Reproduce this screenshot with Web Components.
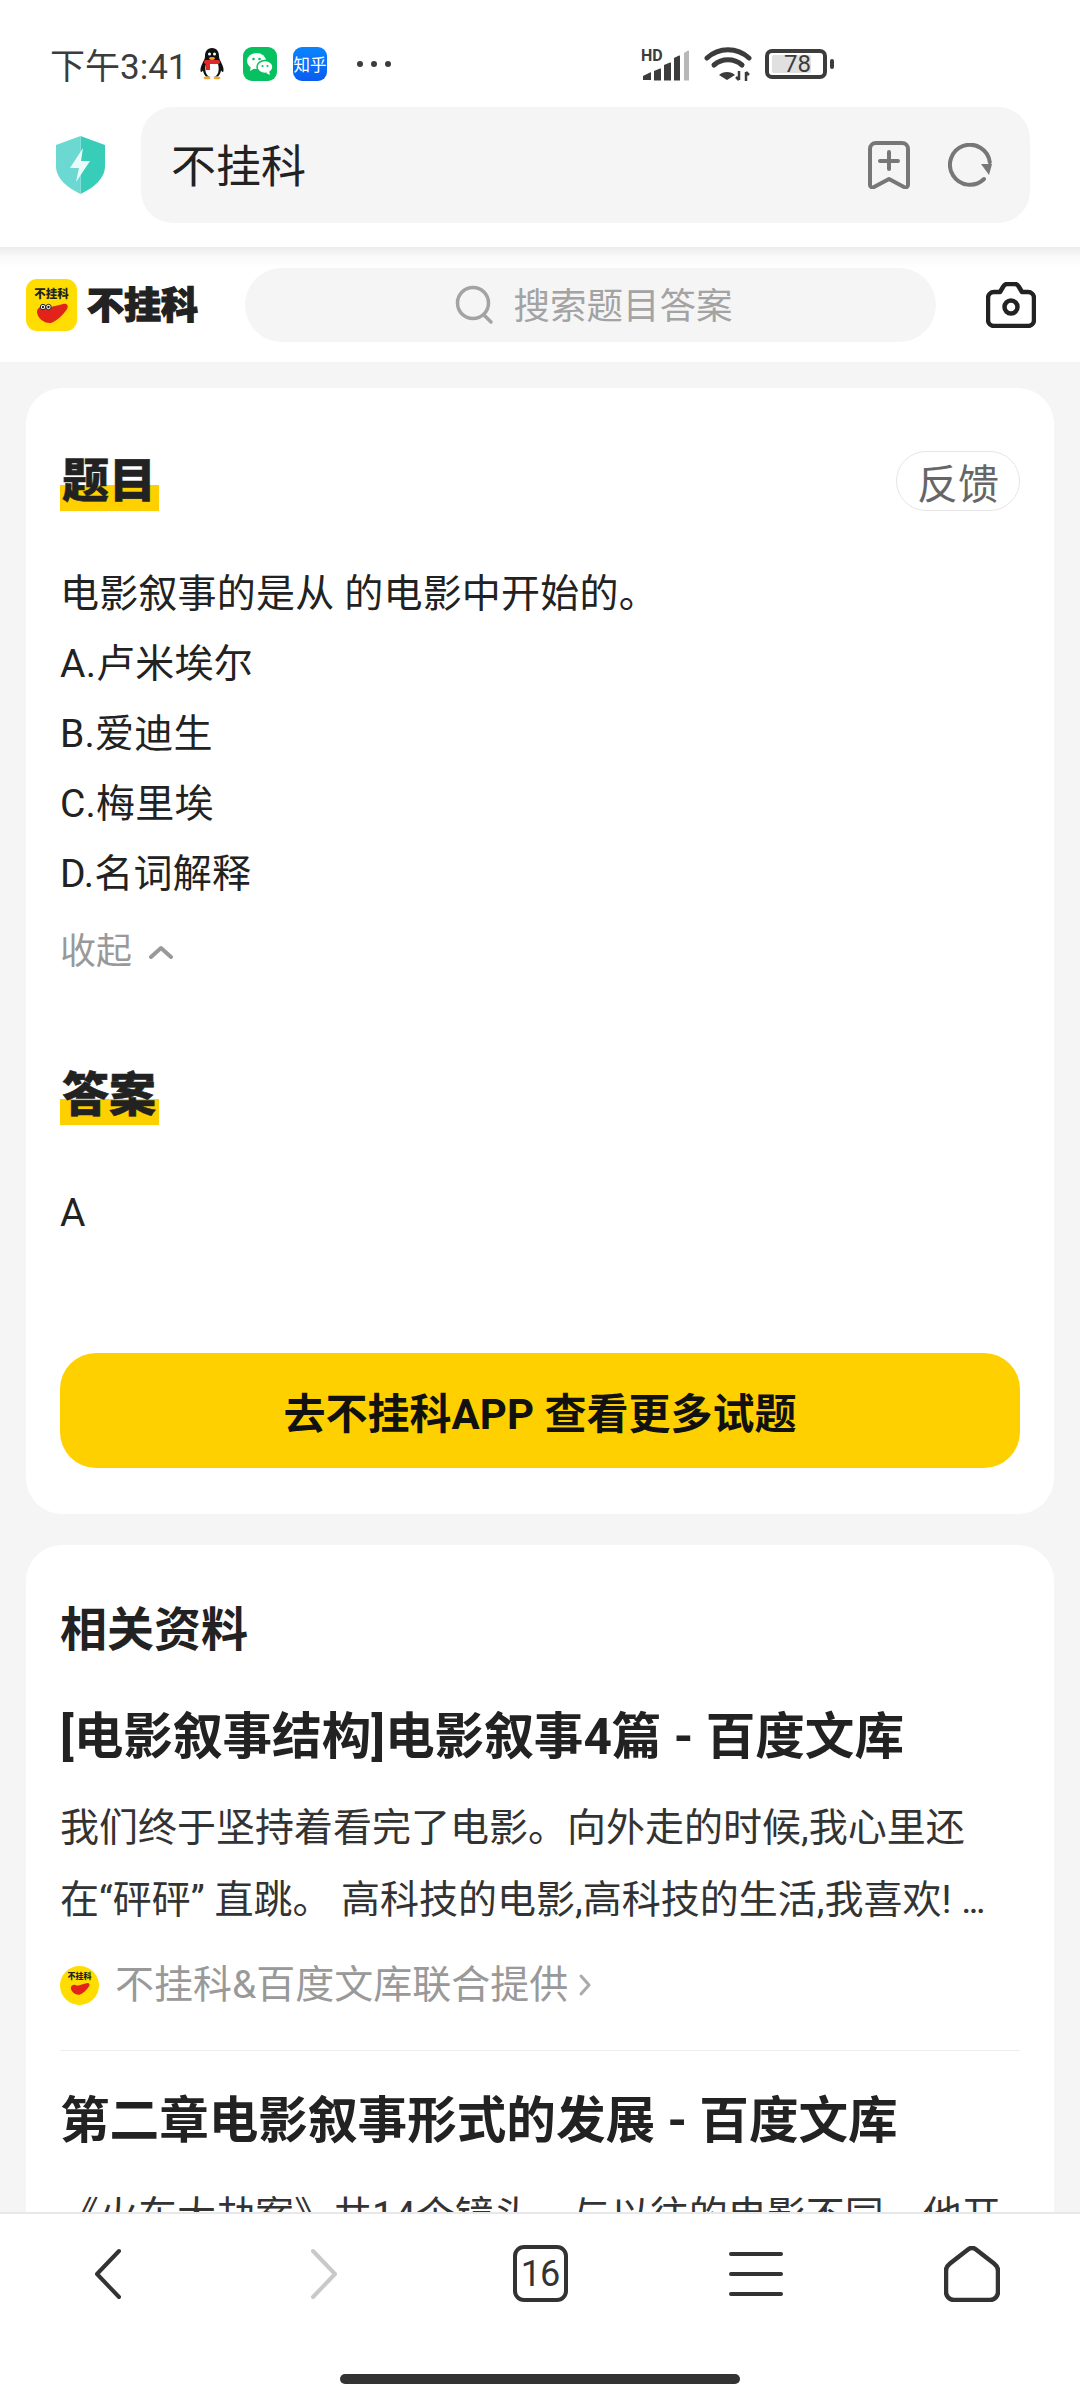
<!DOCTYPE html>
<html lang="zh">
<head>
<meta charset="utf-8">
<title>不挂科</title>
<style>
  html, body { margin: 0; padding: 0; }
  body {
    width: 1080px;
    height: 2400px;
    overflow: hidden;
    display: flex;
    flex-direction: column;
    background: #f5f5f5;
    color: #222;
    font-family: Roboto, "Noto Sans CJK SC", sans-serif;
  }
  page-main { flex: 1; min-height: 0; }
</style>
</head>
<body>
  <status-bar></status-bar>
  <address-bar>不挂科</address-bar>
  <site-header></site-header>
  <page-main>
    <question-card>
      <p>电影叙事的是从 的电影中开始的。</p>
      <p>A.卢米埃尔</p>
      <p>B.爱迪生</p>
      <p>C.梅里埃</p>
      <p>D.名词解释</p>
    </question-card>
    <related-card>
      <result-item title="[电影叙事结构]电影叙事4篇 - 百度文库" source>我们终于坚持着看完了电影。向外走的时候,我心里还在“砰砰” 直跳。 高科技的电影,高科技的生活,我喜欢! <span style="letter-spacing:-3px">...</span></result-item>
      <result-item title="第二章电影叙事形式的发展 - 百度文库">《火车大劫案》共14个镜头，与以往的电影不同，他开</result-item>
    </related-card>
  </page-main>
  <bottom-nav></bottom-nav>

<script>
class StatusBar extends HTMLElement {
    constructor() {
        super();
        this.shadowDOM = this.attachShadow({ mode: "open" });
        this.shadowDOM.innerHTML = `
        <style>
            :host {
                display: flex;
                align-items: center;
                height: 107px;
                padding: 20px 0 0 50px;
                box-sizing: border-box;
                background: #fff;
                color: #3c3c3c;
                font-size: 35px;
            }
            .time { width: 147px; white-space: nowrap; }
            .app { width: 34px; height: 34px; border-radius: 9px; margin-right: 16px; display: flex; align-items: center; justify-content: center; flex: none; }
            .wx { background: #07c160; }
            .zh { background: linear-gradient(#0a84ff, #0a5cf0); color: #fff; font-size: 16.500px; white-space: nowrap; }
            .qq { margin-right: 16px; flex: none; }
            .dots { margin-left: 13px; flex: none; }
            .right { margin-left: auto; display: flex; align-items: center; padding-right: 246px; }
            .right svg { display: block; flex: none; }
            .battery {
                box-sizing: border-box; width: 62px; height: 30px; margin-left: 13px;
                border: 4px solid #3c3c3c; border-radius: 7px; padding: 2px 3px; display: flex;
            }
            .level { width: 39px; background: #e0e0e0; border-radius: 2px; font-size: 24px; line-height: 18px; text-align: right; white-space: nowrap; }
            .nub { width: 4px; height: 10px; background: #3c3c3c; border-radius: 2px; margin-left: 3px; }
        </style>
        <span class="time">下午3:41</span>
        <svg class="qq" width="30" height="34" viewBox="0 0 30 34">
            <path d="M15 1c-5 0-7 4-7 8 0 2-.5 3-1.500 5-1.500 3-3.500 7-3 10 .3 1.500 1.500 1 2.500-.5.8 4 3 6 3 6h12s2.200-2 3-6c1 1.500 2.200 2 2.500.5.500-3-1.500-7-3-10-1-2-1.500-3-1.500-5 0-4-2-8-7-8z" fill="#111"/>
            <path d="M9 17c-1.500 5-1 13 6 13s7.500-8 6-13z" fill="#fff"/>
            <rect x="7" y="13" width="16" height="4" rx="2" fill="#e02a2a"/>
            <rect x="9" y="15" width="4" height="8" fill="#e02a2a"/>
            <ellipse cx="15" cy="11.500" rx="3" ry="1.400" fill="#f5a623"/>
            <circle cx="12.500" cy="7" r="1.500" fill="#fff"/><circle cx="17.500" cy="7" r="1.500" fill="#fff"/>
            <ellipse cx="10" cy="31" rx="3.500" ry="1.300" fill="#f5a623"/><ellipse cx="20" cy="31" rx="3.500" ry="1.300" fill="#f5a623"/>
        </svg>
        <span class="app wx">
            <svg width="28" height="24" viewBox="0 0 28 24">
                <ellipse cx="10.500" cy="9" rx="9.500" ry="8" fill="#fff"/>
                <path d="M5 14l-1 5 5-3z" fill="#fff"/>
                <ellipse cx="19" cy="15" rx="8" ry="6.500" fill="#fff" stroke="#07c160" stroke-width="1.500"/>
                <path d="M23 19l1 4-4-2z" fill="#fff"/>
                <circle cx="7.500" cy="7" r="1.300" fill="#07c160"/><circle cx="13.500" cy="7" r="1.300" fill="#07c160"/>
                <circle cx="16.500" cy="14" r="1.100" fill="#07c160"/><circle cx="21.500" cy="14" r="1.100" fill="#07c160"/>
            </svg>
        </span>
        <span class="app zh">知乎</span>
        <svg class="dots" width="36" height="8" viewBox="0 0 36 8">
            <circle cx="4" cy="4" r="3" fill="#3c3c3c"/><circle cx="18" cy="4" r="3" fill="#3c3c3c"/><circle cx="32" cy="4" r="3" fill="#3c3c3c"/>
        </svg>
        <div class="right">
            <svg width="52" height="40" viewBox="0 -3 52 40">
                <text x="1" y="13.500" font-family="Roboto" font-weight="700" font-size="16" fill="#3c3c3c">HD</text>
                <path d="M3 29l7-3.500q1-.5 1 .5v7H3z" fill="#3c3c3c"/>
                <path d="M14 24l6-2.500q1-.4 1 .6V33.500h-7z" fill="#3c3c3c"/>
                <path d="M24 18l6-2.500q1-.4 1 .6V33.500h-7z" fill="#3c3c3c"/>
                <path d="M34 11l5-2.500q1-.4 1 .6V33.500h-6z" fill="#3c3c3c"/>
                <path d="M44 6l4-2.500q1-.4 1 .6V33.500h-5z" fill="#b8b8b8"/>
            </svg>
            <svg width="48" height="36" viewBox="0 0 48 36" style="margin-left:12px">
                <path d="M3 12C15 1 33 1 45 12" fill="none" stroke="#3c3c3c" stroke-width="5" stroke-linecap="round"/>
                <path d="M10 19c8-7 20-7 28 0" fill="none" stroke="#3c3c3c" stroke-width="5" stroke-linecap="round"/>
                <path d="M23 34l-8-5c4-4 12-4 16 0z" fill="#3c3c3c"/>
                <path d="M35 25v9m-3-3l3 3M42 35v-9m3 3l-3-3" stroke="#3c3c3c" stroke-width="2.500" fill="none"/>
            </svg>
            <div class="battery"><div class="level">78</div></div>
            <div class="nub"></div>
        </div>`;
    }
}

class AddressBar extends HTMLElement {
    constructor() {
        super();
        this.shadowDOM = this.attachShadow({ mode: "open" });
        this.shadowDOM.innerHTML = `
        <style>
            :host {
                display: flex;
                align-items: center;
                height: 140px;
                padding: 0 50px 24px 56px;
                box-sizing: border-box;
                background: #fff;
                position: relative;
                z-index: 1;
            }
            .box {
                flex: 1;
                height: 116px;
                margin-left: 36px;
                padding: 0 38px 0 30px;
                border-radius: 32px;
                background: #f5f5f5;
                display: flex;
                align-items: center;
                font-size: 45px;
                color: #222;
            }
            .text { flex: 1; padding-bottom: 4px; }
            svg { flex: none; display: block; }
        </style>
        <svg width="49" height="58" viewBox="0 0 49 58">
            <path d="M24.500 0L49 9v21c0 13-12 22-24.500 28z" fill="#38cdb9"/>
            <path d="M24.500 0L0 9v21c0 13 12 22 24.500 28z" fill="#6bd8d2"/>
            <path d="M27 12L14 32h9l-3 14 14-21h-9z" fill="#eafcfa"/>
        </svg>
        <div class="box">
            <span class="text"><slot></slot></span>
            <svg width="42" height="48" viewBox="0 0 42 48" fill="none" stroke="#777" stroke-width="4" stroke-linecap="round" stroke-linejoin="round">
                <path d="M2 8a6 6 0 0 1 6-6h26a6 6 0 0 1 6 6v36c0 2-2 3-4 2l-15-8-15 8c-2 1-4 0-4-2z"/>
                <path d="M21 11v17M12 20h18"/>
            </svg>
            <svg width="44" height="44" viewBox="0 0 44 44" fill="none" style="margin-left:38px">
                <path d="M36 36A20 20 0 1 1 41.800 19.200" stroke="#777" stroke-width="4" stroke-linecap="round"/>
                <path d="M33 21h11l-3 11z" fill="#777"/>
            </svg>
        </div>`;
    }
}

class SiteHeader extends HTMLElement {
    constructor() {
        super();
        this.shadowDOM = this.attachShadow({ mode: "open" });
        this.shadowDOM.innerHTML = `
        <style>
            :host {
                display: flex;
                align-items: center;
                height: 115px;
                padding: 0 44px 0 26px;
                box-sizing: border-box;
                background: linear-gradient(#ececec 0, #fafafa 10px, #fff 20px);
            }
            .logo {
                width: 51px; height: 52px; border-radius: 11px; background: #ffdd00;
                display: flex; flex-direction: column; align-items: center; flex: none;
                font-size: 11.500px; font-weight: 900; color: #222; line-height: 14px; padding-top: 8px; box-sizing: border-box;
                white-space: nowrap;
            }
            .word {
                margin-left: 10px; width: 113px; padding-bottom: 3px;
                font-size: 37px; font-weight: 900; color: #222; white-space: nowrap; flex: none;
                -webkit-text-stroke: 1.200px #222;
            }
            .search {
                flex: 1; height: 74px; margin-left: 45px; border-radius: 37px; background: #f5f5f5;
                display: flex; align-items: center; justify-content: center; padding-left: 6px;
                color: #a3a3a3; font-size: 36.500px;
            }
            .search span { padding-bottom: 3px; }
            .search svg { margin-right: 19px; }
            .cam { margin-left: 50px; flex: none; }
        </style>
        <div class="logo">
            <span>不挂科</span>
            <svg width="36" height="23" viewBox="0 0 36 23" style="margin-top:1px">
                <path d="M3 10C3 5 9 3 13 6 18 5 24 3 29 2 33 1 35 4 33 7 29 13 23 19 17 21 11 22 3 16 3 10z" fill="#e2231a"/>
                <circle cx="9" cy="5" r="2.700" fill="#fff" stroke="#222"/><circle cx="14.500" cy="5" r="2.700" fill="#fff" stroke="#222"/>
                <circle cx="9" cy="5" r="1.200" fill="#222"/><circle cx="14.500" cy="5" r="1.200" fill="#222"/>
            </svg>
        </div>
        <span class="word">不挂科</span>
        <div class="search">
            <svg width="40" height="40" viewBox="0 0 40 40" fill="none" stroke="#a3a3a3" stroke-width="3.500" stroke-linecap="round">
                <circle cx="18" cy="18" r="15.500"/><path d="M30 31l6 6"/>
            </svg>
            <span>搜索题目答案</span>
        </div>
        <svg class="cam" width="50" height="46" viewBox="0 0 50 46" fill="none" stroke="#222" stroke-width="4.500" stroke-linejoin="round">
            <path d="M8 10h6l3-5c1-2 2-3 4-3h8c2 0 3 1 4 3l3 5h6a6 6 0 0 1 6 6v22a6 6 0 0 1-6 6H8a6 6 0 0 1-6-6V16a6 6 0 0 1 6-6z"/>
            <circle cx="25" cy="25" r="6.500"/>
        </svg>`;
    }
}

class SectionTitle extends HTMLElement {
    constructor() {
        super();
        this.shadowDOM = this.attachShadow({ mode: "open" });
        this.shadowDOM.innerHTML = `
        <style>
            :host {
                display: inline-block;
                padding: 0 3px 0 2px;
                font-size: 47px;
                line-height: 60px;
                font-weight: 900;
                color: #222;
                -webkit-text-stroke: .500px #222;
                background: linear-gradient(#ffd000, #ffd000) no-repeat left 0 bottom 0 / 100% 26px;
            }
        </style>
        <slot></slot>`;
    }
}

class QuestionCard extends HTMLElement {
    constructor() {
        super();
        this.shadowDOM = this.attachShadow({ mode: "open" });
        this.shadowDOM.innerHTML = `
        <style>
            :host {
                display: block;
                margin: 26px 26px 0;
                height: 1126px;
                padding: 63px 34px 0;
                box-sizing: border-box;
                border-radius: 36px;
                background: #fff;
            }
            .head { display: flex; justify-content: space-between; align-items: center; }
            .feedback {
                box-sizing: border-box; width: 124px; height: 60px; border: 1px solid #e6e6e6; border-radius: 30px;
                display: flex; align-items: center; justify-content: center; font-size: 41px; color: #666;
            }
            .body { margin-top: 48px; font-size: 39px; line-height: 70px; color: #222; letter-spacing: .2px; }
            ::slotted(p) { margin: 0; }
            .fold { margin-top: 18px; font-size: 36px; line-height: 50px; color: #999; display: flex; align-items: center; }
            .fold svg { margin-left: 17px; }
            .ans { margin-top: 88px; }
            .a { margin-top: 58px; font-size: 39px; line-height: 60px; color: #222; }
            .btn {
                margin-top: 110px; height: 115px; border-radius: 36px; background: #ffd000;
                display: flex; align-items: center; justify-content: center;
                font-size: 42px; font-weight: 700; color: #111;
            }
        </style>
        <div class="head">
            <section-title>题目</section-title>
            <div class="feedback">反馈</div>
        </div>
        <div class="body"><slot></slot></div>
        <div class="fold">收起
            <svg width="24" height="14" viewBox="0 0 24 14" fill="none" stroke="#999" stroke-width="4" stroke-linecap="round" stroke-linejoin="round"><path d="M2 12L12 3l10 9"/></svg>
        </div>
        <div class="ans"><section-title>答案</section-title></div>
        <div class="a">A</div>
        <div class="btn">去不挂科APP 查看更多试题</div>`;
    }
}

class RelatedCard extends HTMLElement {
    constructor() {
        super();
        this.shadowDOM = this.attachShadow({ mode: "open" });
        this.shadowDOM.innerHTML = `
        <style>
            :host {
                display: block;
                margin: 31px 26px 0;
                padding: 55px 34px 0;
                box-sizing: border-box;
                border-radius: 36px;
                background: #fff;
            }
            h2 { margin: 0 0 42px; font-size: 47px; line-height: 60px; font-weight: 700; color: #222; }
        </style>
        <h2>相关资料</h2>
        <slot></slot>`;
    }
}

class ResultItem extends HTMLElement {
    constructor() {
        super();
        this.shadowDOM = this.attachShadow({ mode: "open" });
        const hasSource = this.hasAttribute("source");
        this.shadowDOM.innerHTML = `
        <style>
            :host { display: block; }
            h3 { margin: 0; font-size: 49.600px; line-height: 70px; font-weight: 700; color: #222; white-space: nowrap; }
            .text { margin-top: 20px; padding-right: 28px; font-size: 39px; line-height: 72px; color: #333; }
            :host(:not([source])) .text { margin-top: 24px; padding-right: 0; white-space: nowrap; }
            .src { margin-top: 22px; display: flex; align-items: center; font-size: 39px; line-height: 54px; color: #999; }
            .dot {
                width: 39px; height: 39px; border-radius: 50%; background: #ffdd00; margin-right: 16px; flex: none;
                display: flex; flex-direction: column; align-items: center; font-size: 8px; line-height: 10px; font-weight: 900; color: #222; padding-top: 6px; box-sizing: border-box;
            }
            .sep { margin-top: 38px; margin-bottom: 35px; border-top: 1px solid #eee; }
        </style>
        <h3></h3>
        <div class="text"><slot></slot></div>
        ${hasSource ? `
        <div class="src">
            <span class="dot"><span>不挂科</span>
                <svg width="22" height="14" viewBox="0 0 36 23"><path d="M3 10C3 5 9 3 13 6 18 5 24 3 29 2 33 1 35 4 33 7 29 13 23 19 17 21 11 22 3 16 3 10z" fill="#e2231a"/></svg>
            </span>
            <span>不挂科&amp;百度文库联合提供</span>
            <svg width="14" height="24" viewBox="0 0 14 24" fill="none" stroke="#aaa" stroke-width="3" stroke-linecap="round" stroke-linejoin="round" style="margin-left:10px"><path d="M3 3l8 9-8 9"/></svg>
        </div>
        <div class="sep"></div>` : ""}`;
        this.shadowDOM.querySelector("h3").textContent = this.getAttribute("title");
    }
}

class BottomNav extends HTMLElement {
    constructor() {
        super();
        this.shadowDOM = this.attachShadow({ mode: "open" });
        this.shadowDOM.innerHTML = `
        <style>
            :host {
                display: flex;
                flex-direction: column;
                height: 188px;
                flex: none;
                box-sizing: border-box;
                border-top: 2px solid #e8e8e8;
                background: #fff;
                position: relative;
            }
            .row { display: grid; grid-template-columns: repeat(5, 1fr); height: 160px; align-items: center; justify-items: center; padding-bottom: 41px; box-sizing: border-box; }
            .tabs {
                box-sizing: border-box; width: 55px; height: 57px; border: 4px solid #333; border-radius: 11px;
                display: flex; align-items: center; justify-content: center; font-size: 36px; color: #333; letter-spacing: -1px;
            }
            .bar { width: 400px; height: 10px; border-radius: 5px; background: #333; align-self: center; }
        </style>
        <div class="row">
            <svg width="30" height="52" viewBox="0 0 30 52" fill="none" stroke="#333" stroke-width="4" stroke-linecap="round" stroke-linejoin="round"><path d="M26 3L4 26l22 23"/></svg>
            <svg width="30" height="52" viewBox="0 0 30 52" fill="none" stroke="#c9c9c9" stroke-width="4" stroke-linecap="round" stroke-linejoin="round"><path d="M4 3l22 23L4 49"/></svg>
            <div class="tabs">16</div>
            <svg width="54" height="48" viewBox="0 0 54 48" fill="none" stroke="#333" stroke-width="4" stroke-linecap="round"><path d="M2 4h50M2 24h50M2 44h50"/></svg>
            <svg width="56" height="56" viewBox="0 0 56 56" fill="none" stroke="#333" stroke-width="4.500" stroke-linejoin="round"><path d="M24 3.500c2.500-2 5.500-2 8 0l18 14c2.500 2 4 4 4 7V46a8 8 0 0 1-8 8H10a8 8 0 0 1-8-8V24.500c0-3 1.500-5 4-7z"/></svg>
        </div>
        <div class="bar"></div>`;
    }
}

class PageMain extends HTMLElement {
    constructor() {
        super();
        this.shadowDOM = this.attachShadow({ mode: "open" });
        this.shadowDOM.innerHTML = `
        <style>
            :host { display: block; overflow: hidden; background: #f5f5f5; }
        </style>
        <slot></slot>`;
    }
}

customElements.define("status-bar", StatusBar);
customElements.define("address-bar", AddressBar);
customElements.define("site-header", SiteHeader);
customElements.define("section-title", SectionTitle);
customElements.define("question-card", QuestionCard);
customElements.define("related-card", RelatedCard);
customElements.define("result-item", ResultItem);
customElements.define("bottom-nav", BottomNav);
customElements.define("page-main", PageMain);
</script>
</body>
</html>
